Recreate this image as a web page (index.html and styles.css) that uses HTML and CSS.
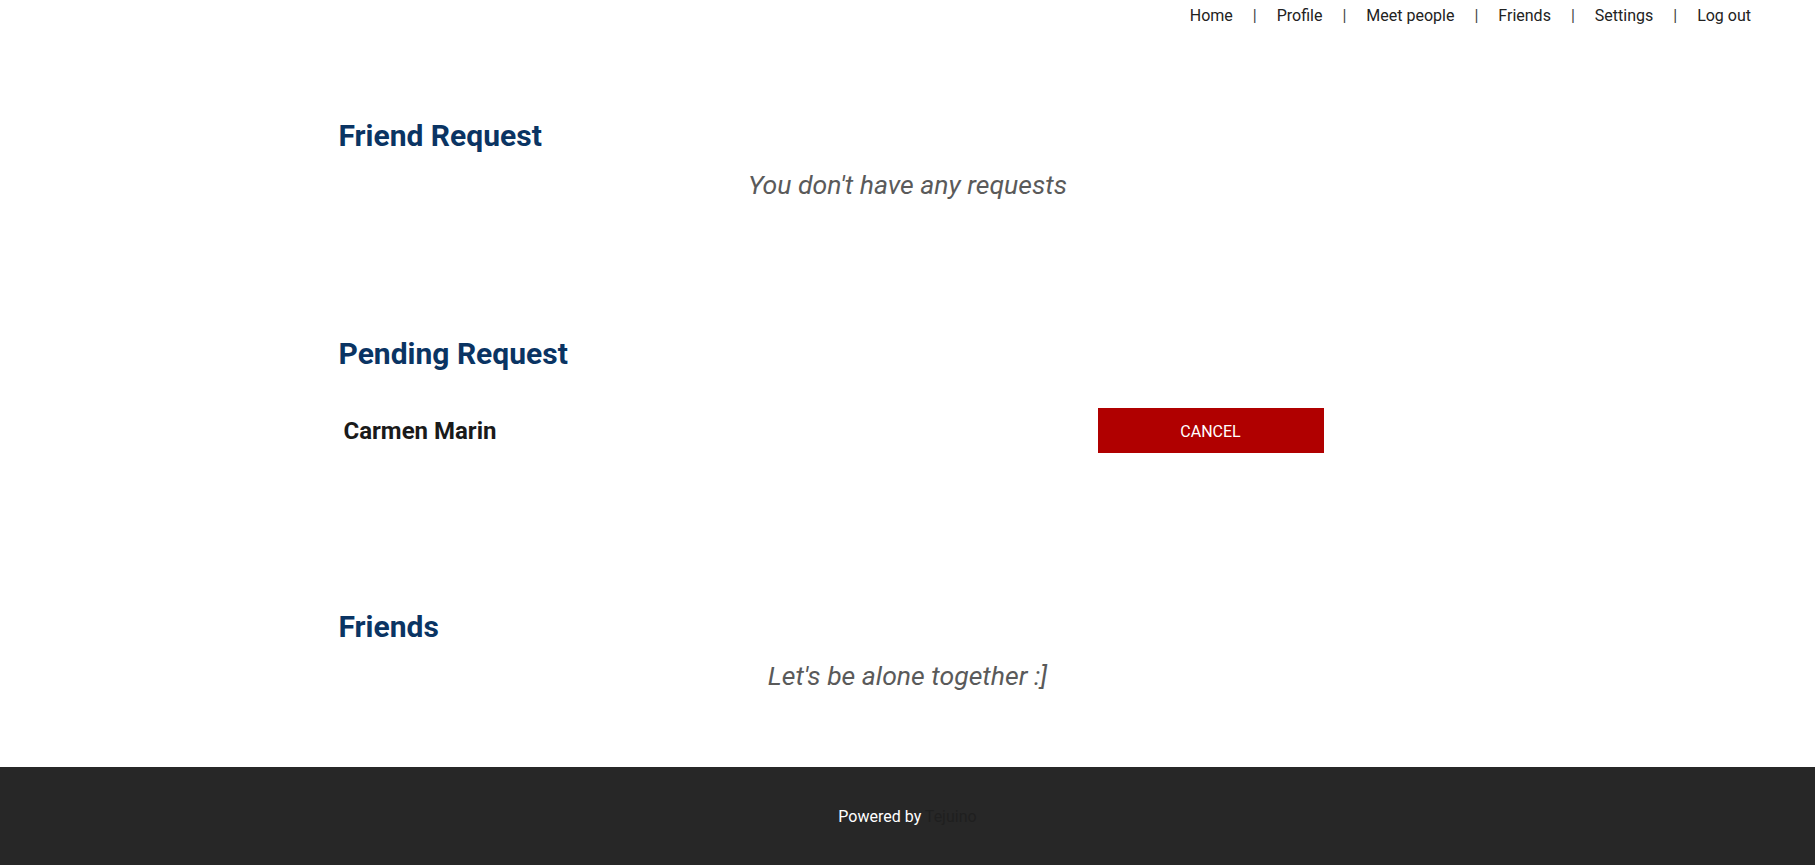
FILE: index.html
```html
<!DOCTYPE html>
<html lang="en">
<head>
<meta charset="utf-8">
<title>Friends</title>
<link rel="stylesheet" href="styles.css">
</head>
<body>
<header class="topbar">
  <nav class="nav">
    <a class="nav-link" href="#">Home</a><span class="sep">|</span>
    <a class="nav-link" href="#">Profile</a><span class="sep">|</span>
    <a class="nav-link" href="#">Meet people</a><span class="sep">|</span>
    <a class="nav-link" href="#">Friends</a><span class="sep">|</span>
    <a class="nav-link" href="#">Settings</a><span class="sep">|</span>
    <a class="nav-link" href="#">Log out</a>
  </nav>
</header>
<main class="container">
  <section class="section section-requests">
    <h2 class="section-title">Friend Request</h2>
    <p class="empty">You don't have any requests</p>
  </section>
  <section class="section section-pending">
    <h2 class="section-title">Pending Request</h2>
    <div class="person-row">
      <div class="person-name">Carmen Marin</div>
      <button class="btn-cancel" type="button">CANCEL</button>
    </div>
  </section>
  <section class="section section-friends">
    <h2 class="section-title">Friends</h2>
    <p class="empty">Let's be alone together :]</p>
  </section>
</main>
<footer class="footer">
  <p class="powered">Powered by <a class="brand" href="#">Tejuino</a></p>
</footer>
</body>
</html>
```
FILE: styles.css
```css
* { box-sizing: border-box; }
html, body { margin: 0; padding: 0; }
body {
  font-family: Roboto, "Noto Sans", "Liberation Sans", sans-serif;
  background: #ffffff;
  color: #222;
  min-height: 865px;
  display: flex;
  flex-direction: column;
}
.topbar {
  height: 31px;
  padding-bottom: 1px;
  display: flex;
  justify-content: flex-end;
  align-items: center;
  padding-right: 64px;
}
.nav {
  display: flex;
  align-items: center;
  font-size: 16px;
  line-height: 29px;
}
.nav-link {
  color: #222;
  text-decoration: none;
}
.sep {
  color: #444;
  margin: 0 20px;
}
.container {
  width: 1140px;
  margin: 0 auto;
  flex: 1;
}
.section-title {
  font-size: 30px;
  line-height: 33px;
  font-weight: 700;
  color: #0a3463;
  margin: 0 0 0 1px;
}
.section-requests { padding-top: 88px; }
.section-pending { padding-top: 134px; }
.section-friends { padding-top: 157px; }
.empty {
  margin: 15px 0 0;
  text-align: center;
  font-style: italic;
  font-size: 26.6px;
  line-height: 36px;
  color: #5a5a5a;
}
.person-row {
  display: grid;
  grid-template-columns: 760px 226px;
  align-items: center;
  margin-top: 38px;
  height: 45px;
}
.person-name {
  padding-left: 6px;
  font-size: 24px;
  font-weight: 700;
  color: #1a1a1a;
}
.btn-cancel {
  height: 45px;
  padding-top: 2px;
  border: 0;
  background: #b00000;
  color: #ffffff;
  font-family: inherit;
  font-size: 16px;
  cursor: pointer;
}
.footer {
  margin-top: 72px;
  height: 98px;
  background: #272727;
  display: flex;
  align-items: center;
  justify-content: center;
}
.powered {
  margin: 0;
  font-size: 16px;
  color: #ffffff;
}
.brand {
  color: #1f1f1f;
  text-decoration: none;
}
```
